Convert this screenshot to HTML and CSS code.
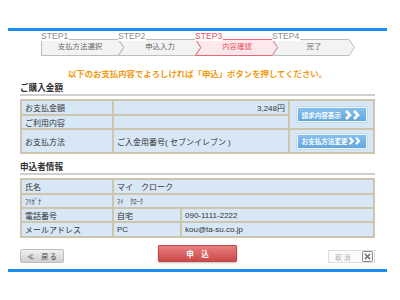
FILE: index.html
```html
<!DOCTYPE html>
<html lang="ja">
<head>
    <meta charset="UTF-8">
    <meta name="viewport" content="width=device-width, initial-scale=1.0">
    <title>内容確認</title>
    <link rel="stylesheet" href="styles.css">
</head>
<body>
    <div class="page">
        <div class="steps">
            <div class="step">
                <svg class="step-shape" width="84" height="25"><polygon points="0.5,8.5 77,8.5 82.5,16.5 77,24.5 0.5,24.5"/></svg>
                <span class="step-label">STEP1</span>
                <span class="step-name first">支払方法選択</span>
            </div>
            <div class="step">
                <svg class="step-shape" width="84" height="25"><polygon points="0.5,8.5 77,8.5 82.5,16.5 77,24.5 0.5,24.5 6,16.5"/></svg>
                <span class="step-label">STEP2</span>
                <span class="step-name">申込入力</span>
            </div>
            <div class="step active">
                <svg class="step-shape" width="84" height="25"><polygon points="0.5,8.5 77,8.5 82.5,16.5 77,24.5 0.5,24.5 6,16.5"/></svg>
                <span class="step-label">STEP3</span>
                <span class="step-name">内容確認</span>
            </div>
            <div class="step">
                <svg class="step-shape" width="84" height="25"><polygon points="0.5,8.5 77,8.5 82.5,16.5 77,24.5 0.5,24.5 6,16.5"/></svg>
                <span class="step-label">STEP4</span>
                <span class="step-name">完了</span>
            </div>
        </div>

        <p class="message">以下のお支払内容でよろしければ「申込」ボタンを押してください。</p>

        <h2 class="section">ご購入金額</h2>
        <table class="info">
            <colgroup><col class="c-label"><col class="c-wide"><col class="c-btn"></colgroup>
            <tr class="h15">
                <td>お支払金額</td>
                <td class="price">3,248円</td>
                <td class="btncell" rowspan="2">
                    <button class="blue">請求内容表示<svg width="20" height="10" viewBox="0 0 20 10"><path d="M2 1l4 4-4 4M10 1l4 4-4 4"/></svg></button>
                </td>
            </tr>
            <tr class="h14">
                <td>ご利用内容</td>
                <td></td>
            </tr>
            <tr class="h24">
                <td>お支払方法</td>
                <td>ご入金用番号( セブンイレブン )</td>
                <td class="btncell">
                    <button class="blue">お支払方法変更<svg width="20" height="10" viewBox="0 0 20 10"><path d="M2 1l4 4-4 4M10 1l4 4-4 4"/></svg></button>
                </td>
            </tr>
        </table>

        <h2 class="section second">申込者情報</h2>
        <table class="info">
            <colgroup><col class="c-label"><col class="c-type"><col class="c-rest"></colgroup>
            <tr class="h15">
                <td>氏名</td>
                <td colspan="2">マイ　クローク</td>
            </tr>
            <tr class="h14">
                <td class="kana">ﾌﾘｶﾞﾅ</td>
                <td class="kana" colspan="2">ﾏｲ　ｸﾛｰｸ</td>
            </tr>
            <tr class="h14">
                <td>電話番号</td>
                <td>自宅</td>
                <td>090-1111-2222</td>
            </tr>
            <tr class="h15">
                <td>メールアドレス</td>
                <td>PC</td>
                <td>kou@ta-su.co.jp</td>
            </tr>
        </table>

        <div class="actions">
            <button class="back">≪　戻 る</button>
            <button class="apply">申　込</button>
            <button class="cancel">取 消<svg width="11" height="11" viewBox="0 0 11 11"><rect x="0.5" y="0.5" width="10" height="10" rx="1"/><path d="M3 3l5 5M8 3l-5 5"/></svg></button>
        </div>
    </div>
</body>
</html>
```

FILE: styles.css
```css
* {
    margin: 0;
    padding: 0;
    box-sizing: border-box;
}
body {
    background: #fff;
    color: #333;
    font-family: "Liberation Sans", "Noto Sans CJK JP", sans-serif;
}
.page {
    width: 379px;
    margin: 28px 0 0 8px;
    padding: 0 12px 6px;
    border-top: 3px solid #1e8ff2;
    border-bottom: 3px solid #1e8ff2;
}

/* steps */
.steps {
    display: flex;
    margin-left: 21px;
    height: 25px;
}
.step {
    position: relative;
    width: 84px;
    height: 25px;
}
.step + .step {
    margin-left: -7px;
}
.step-shape {
    position: absolute;
    top: 0;
    left: 0;
}
.step-shape polygon {
    fill: #f3f3f3;
    stroke: #bcbcbc;
    stroke-width: 1;
}
.step-label {
    position: absolute;
    top: 0;
    left: 0;
    font-size: 8.6px;
    line-height: 10px;
    color: #8a8a8a;
    background: #fff;
    padding-right: 1px;
}
.step-name {
    position: relative;
    display: block;
    padding: 8px 6px 0 6px;
    height: 25px;
    line-height: 16px;
    font-size: 7.4px;
    color: #666;
    text-align: center;
}
.step-name.first {
    padding-left: 0;
}
.step.active .step-shape polygon {
    fill: #fde9eb;
    stroke: #ee6676;
}
.step.active .step-label,
.step.active .step-name {
    color: #e6505f;
}

.message {
    margin-top: 13px;
    font-size: 8.4px;
    line-height: 10px;
    font-weight: bold;
    color: #f39a12;
    text-align: center;
}

.section {
    margin-top: 4px;
    font-size: 8.6px;
    line-height: 10px;
    padding-bottom: 1px;
    border-bottom: 2px solid #cfcfcf;
    color: #333;
}
.section.second {
    margin-top: 8px;
}

/* tables */
.info {
    width: 100%;
    margin-top: 3px;
    border-collapse: collapse;
    table-layout: fixed;
    font-size: 8px;
}
.info td {
    border: 2px solid #cdc5ac;
    background: #d7e7f6;
    padding: 0 3px;
    color: #333;
    white-space: nowrap;
}
.c-label {
    width: 92px;
}
.c-wide {
    width: 176px;
}
.c-type {
    width: 68px;
}
.h15 td {
    height: 15px;
}
.h14 td {
    height: 14px;
}
.h24 td {
    height: 24px;
}
.info .price {
    text-align: right;
}
.info .kana {
    font-size: 6.5px;
}
.info .btncell {
    text-align: center;
    padding: 0;
}
.blue {
    display: inline-flex;
    align-items: center;
    justify-content: space-between;
    width: 70px;
    height: 15px;
    padding: 0 2px 0 4px;
    border: 1px solid #eef5fb;
    outline: 1px solid #c6daee;
    background: linear-gradient(#86c0ec, #63a7df);
    color: #fff;
    font-family: "Noto Sans CJK JP", sans-serif;
    font-size: 6.6px;
    font-weight: bold;
}
.blue svg path {
    fill: none;
    stroke: #fff;
    stroke-width: 2.6;
}

/* bottom buttons */
.actions {
    display: grid;
    grid-template-columns: 1fr auto 1fr;
    align-items: end;
    margin-top: 7px;
    height: 18px;
}
.actions button {
    font-family: "Noto Sans CJK JP", sans-serif;
    cursor: pointer;
}
.back {
    justify-self: start;
    width: 44px;
    height: 14px;
    border: 1px solid #bdbdbd;
    border-radius: 2px;
    background: linear-gradient(#f0f0f0, #cfcfcf);
    color: #444;
    font-size: 7px;
    line-height: 12px;
}
.apply {
    justify-self: center;
    align-self: start;
    width: 79px;
    height: 17px;
    border: 1px solid #c24646;
    border-radius: 1px;
    background: linear-gradient(#e88080, #cc4848);
    box-shadow: 0 1px 2px rgba(0, 0, 0, 0.25);
    color: #fff;
    font-size: 7.5px;
    font-weight: bold;
}
.cancel {
    justify-self: end;
    display: flex;
    align-items: center;
    justify-content: space-between;
    width: 47px;
    height: 13px;
    padding: 0 1px 0 6px;
    border: 1px solid #dcdcdc;
    background: #fbfbfb;
    color: #b0b0b0;
    font-size: 7px;
}
.cancel svg rect {
    fill: #f4f4f4;
    stroke: #8a8a8a;
}
.cancel svg path {
    stroke: #666;
    stroke-width: 1.3;
}
```
